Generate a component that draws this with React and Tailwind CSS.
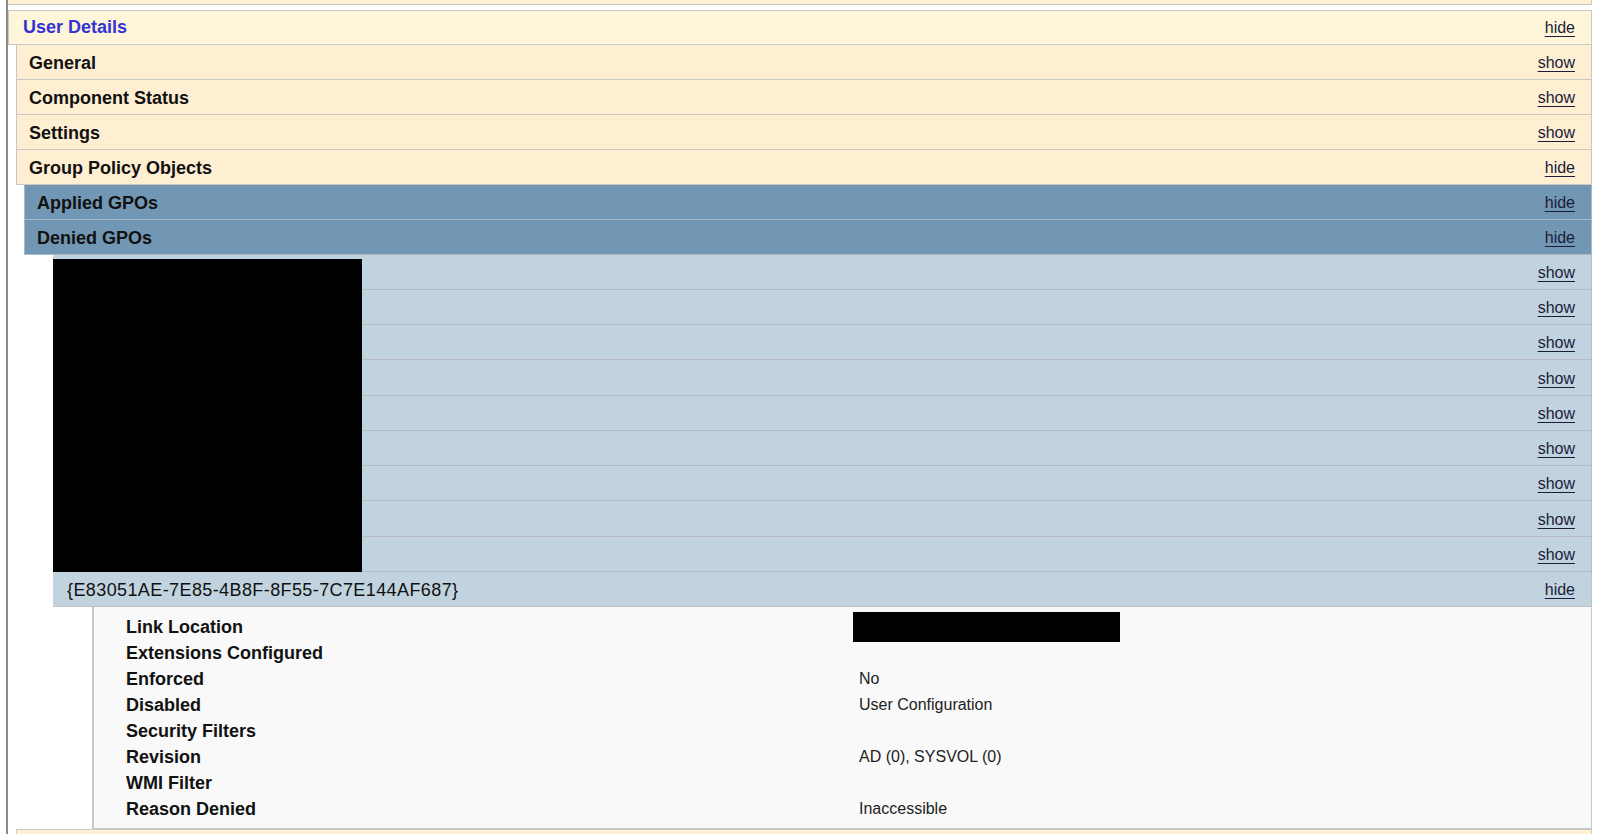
import React from 'react';

const font = { fontFamily: '"Liberation Sans", Arial, sans-serif' };

function Toggle({ label }) {
    return (
        <span className="text-[16px] font-normal text-[#1b1b3a] underline underline-offset-[3px]">{label}</span>
    );
}

function Row({ className, textClass, title, toggle, tall }) {
    return (
        <div className={(tall ? 'h-[36px] ' : 'h-[35px] ') + 'flex shrink-0 items-center justify-between border-r border-b pt-[2px] pr-[16px] ' + className}>
            <span className={'text-[18px] font-bold ' + textClass}>{title}</span>
            <Toggle label={toggle} />
        </div>
    );
}

const details = [
    ['Link Location', null],
    ['Extensions Configured', ''],
    ['Enforced', 'No'],
    ['Disabled', 'User Configuration'],
    ['Security Filters', ''],
    ['Revision', 'AD (0), SYSVOL (0)'],
    ['WMI Filter', ''],
    ['Reason Denied', 'Inaccessible'],
];

export default function App() {
    return (
        <div className="h-[834px] overflow-hidden bg-white pl-[6px] text-[#111]" style={font}>
            <div className="flex h-full w-[1586px] flex-col border-l-2 border-[#8c8c8c]">
                {/* previous section, cut off at the top */}
                <div className="h-[5px] shrink-0 border-r border-b border-[#c8c8c8] bg-[#fff1d2]" />
                <div className="h-[5px] shrink-0" />

                {/* User Details */}
                <div className="flex h-[35px] shrink-0 items-center justify-between border border-[#c8c8c8] bg-[#fff5d8] pl-[14px] pr-[16px]">
                    <span className="text-[18px] font-bold text-[#3434d4]">User Details</span>
                    <Toggle label="hide" />
                </div>

                <Row className="ml-[8px] border-l border-[#c8c8c8] bg-[#ffefd2] pl-[12px]" title="General" toggle="show" />
                <Row className="ml-[8px] border-l border-[#c8c8c8] bg-[#ffefd2] pl-[12px]" title="Component Status" toggle="show" />
                <Row className="ml-[8px] border-l border-[#c8c8c8] bg-[#ffefd2] pl-[12px]" title="Settings" toggle="show" />
                <Row className="ml-[8px] border-l border-[#c8c8c8] bg-[#ffefd2] pl-[12px]" title="Group Policy Objects" toggle="hide" />

                <Row className="ml-[16px] border-l border-[#a9b9c6] bg-[#7297b4] pl-[12px]" title="Applied GPOs" toggle="hide" />
                <Row className="ml-[16px] border-l border-[#a9b9c6] bg-[#7297b4] pl-[12px]" title="Denied GPOs" toggle="hide" />

                {/* denied GPO list, names redacted */}
                <div className="relative ml-[45px] flex shrink-0 flex-col">
                    {Array.from({ length: 9 }).map((_, i) => (
                        <Row key={i} tall={i === 3 || i === 7} className="border-[#b7bcc1] bg-[#c1d3df]" title="" toggle="show" />
                    ))}
                    <div className="absolute top-[4px] bottom-0 left-0 w-[309px] bg-black" />
                </div>

                <Row
                    className="ml-[45px] border-[#c0c4c8] bg-[#c1d3df] pl-[14px]"
                    textClass="!font-normal tracking-[0.4px]"
                    title="{E83051AE-7E85-4B8F-8F55-7C7E144AF687}"
                    toggle="hide"
                />

                {/* GPO details */}
                <div className="ml-[84px] flex shrink-0 border-r border-b border-l-2 border-[#c8c8c8] bg-[#f9f9f9] pt-[7px] pb-[6px] pl-[32px]">
                    <div className="flex w-[733px] flex-col">
                        {details.map(([label]) => (
                            <div key={label} className="h-[26px] text-[18px] leading-[26px] font-bold">{label}</div>
                        ))}
                    </div>
                    <div className="flex flex-col">
                        {details.map(([label, value]) => (
                            <div key={label} className="h-[26px] text-[16px] leading-[26px] text-[#222]">
                                {value === null ? (
                                    <div className="-mt-[2px] -ml-[6px] h-[30px] w-[267px] bg-black" />
                                ) : (
                                    value
                                )}
                            </div>
                        ))}
                    </div>
                </div>

                {/* next section, cut off at the bottom */}
                <div className="ml-[8px] h-[20px] shrink-0 border-t border-r border-l border-[#c8c8c8] bg-[#fff1d2]" />
            </div>
        </div>
    );
}
